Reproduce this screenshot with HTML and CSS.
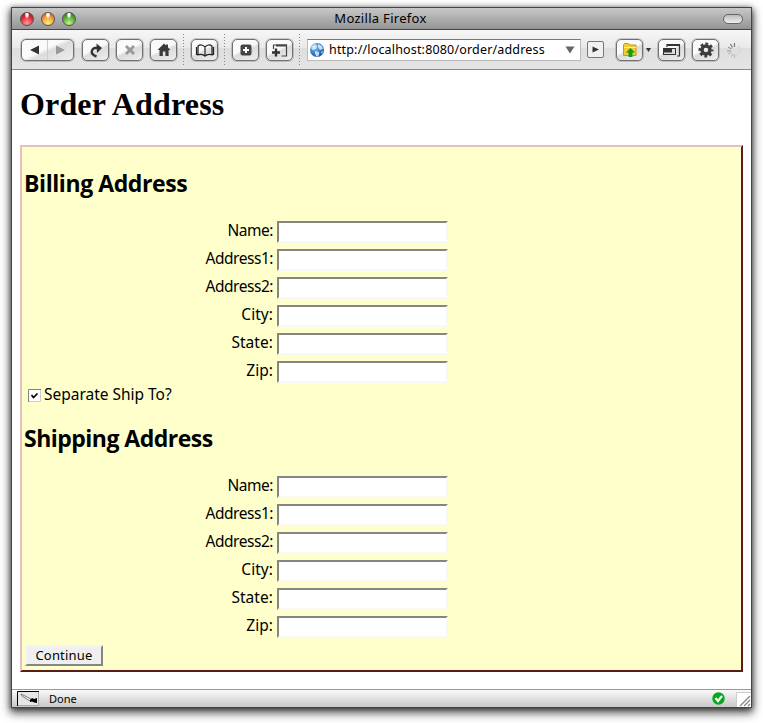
FILE: index.html
```
<!DOCTYPE html>
<html lang="en">
<head>
<meta charset="utf-8">
<title>Order Address</title>
<link rel="stylesheet" href="styles.css">
</head>
<body>
<div class="window">
  <header class="titlebar">
    <div class="lights"><i class="red"></i><i class="amber"></i><i class="green"></i></div>
    <span class="window-title">Mozilla Firefox</span>
    <i class="pill"></i>
  </header>
  <nav class="toolbar">
    <div class="btn history"><svg width="51" height="20" viewBox="0 0 51 20"><path d="M25.500 0v20" stroke="#ccc"/><path d="M17 5.500v9L8 10z" fill="#333"/><path d="M34 5.500v9l9-4.500z" fill="#999"/></svg></div>
    <div class="btn"><svg viewBox="0 0 26 20"><path d="M13.500 16.500C6 14 8 7.500 15 7.800" fill="none" stroke="#333" stroke-width="2.400"/><path d="M13.500 3.500L19 8l-5 5z" fill="#333"/></svg></div>
    <div class="btn"><svg viewBox="0 0 26 20"><path d="M9 6l8 8M17 6l-8 8" stroke="#999" stroke-width="3"/></svg></div>
    <div class="btn"><svg viewBox="0 0 26 20"><path d="M13 3.500L6.500 10h2v6h3.300v-4.500h2.600V16h3.200v-6h2L17 7.500V4.500h-2v1z" fill="#3a3a3a"/></svg></div>
    <i class="sep"></i>
    <div class="btn book"><svg viewBox="0 0 26 20"><path d="M13 7C11 4.500 8 4.500 6 6v8.500H4.500V7M13 7c2-2.500 5-2.500 7-1v8.500h1.500V7M5 15c3-1 6-1 8 1 2-2 5-2 8-1M13 7v8.500" fill="none" stroke="#222" stroke-width="1.200"/></svg></div>
    <i class="sep"></i>
    <div class="btn"><svg viewBox="0 0 26 20"><rect x="7.500" y="4.500" width="11" height="11" rx="2" fill="#444"/><path d="M13 7v6M10 10h6" stroke="#fff" stroke-width="2"/></svg></div>
    <div class="btn tab"><svg viewBox="0 0 26 20"><path d="M6.500 9V5h13v11h-5" fill="none" stroke="#444" stroke-width="1.200"/><path d="M9 5.500h11" stroke="#444" stroke-width="2"/><path d="M9 8.500v8M5 12.500h8" stroke="#333" stroke-width="2.400"/></svg></div>
    <i class="sep"></i>
    <div class="url">
      <svg class="globe" width="16" height="16" viewBox="0 0 16 16"><defs><radialGradient id="sea" cx=".35" cy=".3" r=".8"><stop offset="0" stop-color="#8fc5f0"/><stop offset=".6" stop-color="#3277c4"/><stop offset="1" stop-color="#194b93"/></radialGradient></defs><circle cx="8" cy="8" r="7" fill="url(#sea)"/><path d="M3 4l3-2 2 2-1 3-3 1-2-2zM9 2l4 2 1 3-3 1-2-3zM6 9l4 1v3l-2 2-2-3zM12 10l2-1-1 3z" fill="#dceefb" opacity=".85"/></svg>
      <span>http://localhost:8080/order/address</span>
      <svg class="drop" width="10" height="8" viewBox="0 0 10 8"><path d="M.5.500h9L5 7.500z" fill="#666"/></svg>
    </div>
    <div class="go"><svg width="15" height="15" viewBox="0 0 15 15"><path d="M4.500 4.500v6L11 7.500z" fill="#333"/></svg></div>
    <div class="btn folder"><svg viewBox="0 0 26 20"><path d="M6.500 15.500v-11l1-1h4l1.500 1.500h6v10.500z" fill="#f3cb2e" stroke="#c59a1c"/><path d="M7 7.500h12" stroke="#fff09a"/><path d="M13.500 8l4.500 4.500h-2.500v4.500h-4v-4.500H9z" fill="#189b1c"/></svg></div>
    <svg class="mini" width="5" height="4" viewBox="0 0 5 4"><path d="M0 0h5L2.500 4z" fill="#333"/></svg>
    <div class="btn windows"><svg viewBox="0 0 26 20"><path d="M8 7V4.500h12.500V16H18" fill="none" stroke="#333" stroke-width="1.200"/><path d="M8.500 5H20" stroke="#333" stroke-width="2"/><rect x="4.500" y="8.500" width="12" height="6" fill="#ddd" stroke="#333"/><path d="M5 9h8v3.500H5z" fill="#333"/></svg></div>
    <div class="btn gear"><svg viewBox="0 0 26 20"><circle cx="13" cy="10" r="4" fill="none" stroke="#3d3d3d" stroke-width="3.400"/><circle cx="13" cy="10" r="6.300" fill="none" stroke="#3d3d3d" stroke-width="2.400" stroke-dasharray="2.800 2.148" stroke-dashoffset="1.400"/></svg></div>
    <svg class="spinner" width="15" height="16" viewBox="0 0 15 16"><g fill="none" stroke-width="1.200"><path d="M7.500 5V1M5.500 5.500l-2-3.500" stroke="#777"/><path d="M4.500 7L1 5M4 9H0" stroke="#999"/><path d="M4.500 10.500L1 12M6 12l-2 3M7.500 12v4" stroke="#bbb"/><path d="M9 12l2 3M10.500 10l3 2M11 8h4M10 6l3-2" stroke="#d5d5d5"/></g></svg>
  </nav>
  <main>
    <h1>Order Address</h1>
    <form class="panel">
      <h2>Billing Address</h2>
      <div class="fields">
        <label>Name:</label><input type="text">
        <label>Address1:</label><input type="text">
        <label>Address2:</label><input type="text">
        <label class="short">City:</label><input type="text">
        <label class="short">State:</label><input type="text">
        <label class="short">Zip:</label><input type="text">
      </div>
      <div class="separate"><svg width="13" height="13" viewBox="0 0 13 13"><path d="M0 0h13v13H0z" fill="#fff"/><path d="M.5 13V.500H13" fill="none" stroke="#808080"/><path d="M1 12.500h11.500V1" fill="none" stroke="#ccc"/><path d="M3.500 6l2 2.500 4-4" fill="none" stroke="#000" stroke-width="1.700"/></svg><span>Separate Ship To?</span></div>
      <h2 class="shipping">Shipping Address</h2>
      <div class="fields">
        <label>Name:</label><input type="text">
        <label>Address1:</label><input type="text">
        <label>Address2:</label><input type="text">
        <label class="short">City:</label><input type="text">
        <label class="short">State:</label><input type="text">
        <label class="short">Zip:</label><input type="text">
      </div>
      <button type="button">Continue</button>
    </form>
  </main>
  <footer class="status">
    <svg class="tool" width="22" height="15" viewBox="0 0 22 15"><path d="M0 0h22v15H0z" fill="#e6e6e6"/><path d="M.5 15V.500H22" fill="none" stroke="#000"/><path d="M1 14.500h20.500V1" fill="none" stroke="#aaa"/><path d="M4 3l10 5-1 2L5 5z" fill="#fff" stroke="#777"/><path d="M13 9l2-2 2 1 3-1v5l-3-.5-2-1-2 .5z" fill="#000"/></svg>
    <span>Done</span>
    <svg class="ok" width="13" height="13" viewBox="0 0 13 13"><circle cx="6.500" cy="6.500" r="6.200" fill="#0aa81e"/><path d="M3.500 6l2.500 3 4-5" fill="none" stroke="#fff" stroke-width="2.200"/></svg>
    <svg class="grip" width="15" height="15" viewBox="0 0 15 15"><path d="M0 0h15v15H0z" fill="#fff"/><path d="M.5 15V.500H15" fill="none" stroke="#ccc"/><path d="M4 14L14 4M8 14l6-6M12 14l2-2" stroke="#888" stroke-width="1.300"/></svg>
  </footer>
</div>
</body>
</html>
```
FILE: styles.css
```
* { box-sizing: border-box; }
body { margin: 0; background: #fff; height: 723px; overflow: hidden; padding: 7px 11px 0; font-family: "Noto Sans", sans-serif; color: #000; }
.window { width: 741px; height: 701px; border: 1px solid #444; background: #fff; display: flex; flex-direction: column; box-shadow: 0 4px 9px 1px rgba(0,0,0,.65), 0 1px 5px rgba(0,0,0,.5); }
.titlebar { height: 22px; flex: none; display: flex; align-items: center; justify-content: space-between; padding: 0 8px; background: linear-gradient(#c8c8c8, #949494); border-bottom: 1px solid #444; }
.lights { display: flex; gap: 7px; width: 56px; }
.lights i { width: 14px; height: 14px; border-radius: 50%; border: 1px solid #555; flex: none; }
.red { background: radial-gradient(ellipse at 50% 12%, #fff 0 12%, transparent 30%), radial-gradient(circle at 50% 85%, #ff9a9a, #e02b35 55%, #8c1218); }
.amber { background: radial-gradient(ellipse at 50% 12%, #fff 0 12%, transparent 30%), radial-gradient(circle at 50% 85%, #fff07a, #ef9b3d 55%, #9a5515); }
.green { background: radial-gradient(ellipse at 50% 12%, #fff 0 12%, transparent 30%), radial-gradient(circle at 50% 85%, #c5f58a, #58a936 55%, #215d12); }
.window-title { font-size: 13px; line-height: 18px; letter-spacing: .3px; padding-bottom: 2px; margin-left: -2px; }
.pill { width: 20px; height: 10px; border: 1px solid #666; border-radius: 5px; background: linear-gradient(#bbb, #eee); margin-left: 36px; }
.toolbar { height: 40px; flex: none; display: flex; align-items: center; padding-left: 9px; background: linear-gradient(#f6f6f6 0, #e9e9e9 46%, #dedede 47%, #e5e5e5); border-bottom: 1px solid #888; }
.toolbar > * { flex: none; }
.btn { width: 27px; height: 22px; border: 1.500px solid #707070; border-radius: 5px; background: linear-gradient(155deg, #fafafa 45%, #dcdcdc 55%, #eee); box-shadow: 0 0 0 1px rgba(0,0,0,.16); margin-right: 7px; display: flex; align-items: center; justify-content: center; }
.btn svg { width: 26px; height: 20px; flex: none; }
.btn.history { width: 53px; margin-right: 8px; }
.btn.history svg { width: 51px; }
.btn.history ~ .btn { margin-right: 7px; }
.sep { width: 1px; height: 32px; background: repeating-linear-gradient(#888 0 1px, transparent 1px 3px); margin-left: -1px; margin-right: 7px; }
.toolbar .btn.book, .toolbar .btn.tab { margin-right: 7px; }
.url { width: 274px; height: 22px; border: 1px solid #bbb; border-top: 1px solid #777; background: #fff; display: flex; align-items: center; padding-left: 1px; font-size: 12.500px; letter-spacing: .17px; white-space: nowrap; }
.url span { margin-left: 4px; width: 236px; line-height: 20px; padding-top: 1px; }
.go { width: 17px; height: 17px; margin-left: 6px; border: 1px solid #777; border-radius: 2px; background: #f0f0f0; display: flex; }
.btn.folder { margin-left: 12px; }
.toolbar .btn.folder { margin-right: 3px; }
.mini { margin-right: 7px; }
.spinner { margin-left: 1px; }
main { height: 619px; flex: none; padding: 0 8px; }
h1 { font: bold 32px/38px "Liberation Serif", serif; letter-spacing: .15px; margin: 0; padding-top: 15px; height: 76px; }
.panel { width: 723px; height: 527px; margin-top: -1px; border: 2px solid; border-color: #e6bfbf #5c1a1a #5c1a1a #e6bfbf; background: #ffc; padding: 0 2px; }
h2 { font: bold 23px/28px "Open Sans", sans-serif; letter-spacing: -.42px; margin: 0; padding-top: 22px; height: 74px; }
.fields { display: grid; grid-template-columns: 249px 171px; column-gap: 4px; grid-auto-rows: 28px; }
.fields label { text-align: right; font-size: 15.500px; line-height: 18px; letter-spacing: -.47px; }
.fields label.short { letter-spacing: .05px; }
.fields input { width: 171px; height: 22px; margin: 0; padding: 0; border: 2px solid; border-color: #858585 #f8f8f8 #f8f8f8 #858585; background: #fff; border-radius: 0; }
.separate { height: 20px; margin-top: -4px; display: flex; align-items: center; padding-left: 4px; font-size: 15.500px; line-height: 18px; letter-spacing: -.02px; }
.separate span { margin-left: 3px; padding-bottom: 2px; }
h2.shipping { height: 71px; padding-top: 19px; letter-spacing: -.52px; }
button { display: block; width: 78px; height: 21px; margin: 1px 0 0 1px; padding: 0; border: 2px solid; border-color: #f4f4f4 #858585 #858585 #f4f4f4; background: #efefef; font: 13px/17px "Noto Sans", sans-serif; letter-spacing: .2px; color: #000; }
.status { height: 18px; flex: none; display: flex; align-items: center; border-top: 1px solid #999; background: linear-gradient(#fafafa, #c8c8c8); padding-left: 5px; font-size: 11px; line-height: 15px; }
.status span { margin-left: 10px; padding-bottom: 1px; }
.ok { margin-left: auto; }
.grip { margin: 2px 0 0 11px; }
```
